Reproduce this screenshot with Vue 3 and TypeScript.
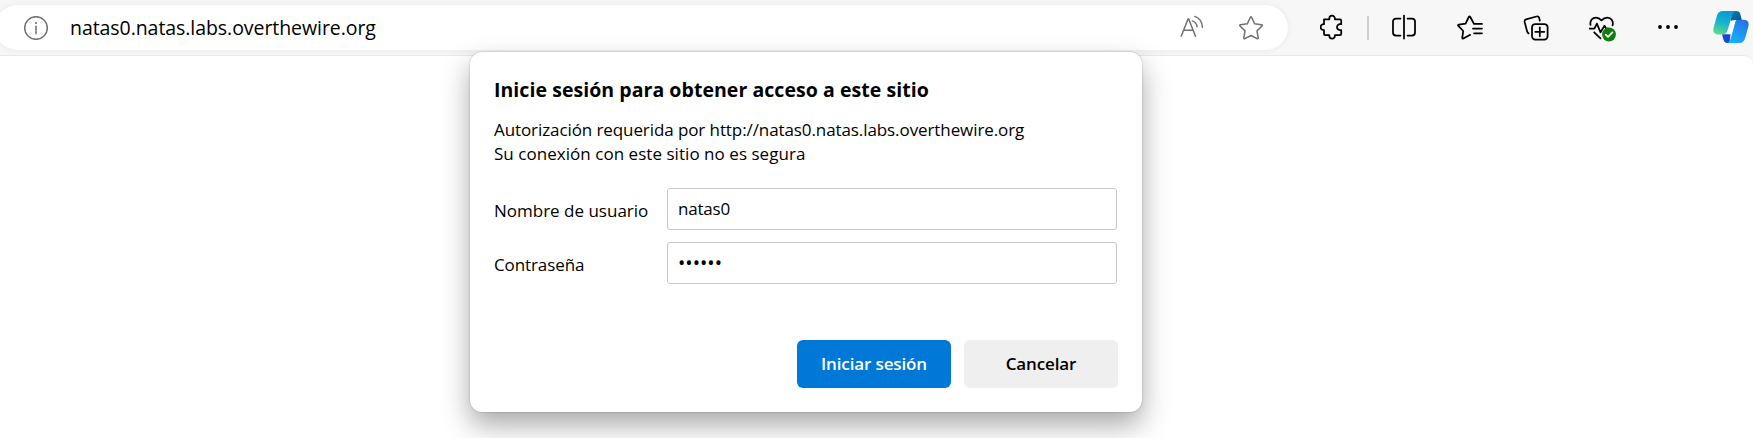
<script setup lang="ts">
import { ref } from 'vue'

const address = 'natas0.natas.labs.overthewire.org'
const username = ref('natas0')
const password = ref('natas0')
</script>

<template>
  <div class="browser">
    <header class="toolbar">
      <div class="address">
        <svg class="info" width="24" height="24" viewBox="0 0 24 24">
          <circle cx="12" cy="12" r="11.3" />
          <path d="M12 10.2v7.6" />
          <circle class="dot" cx="12" cy="7" r="1.1" />
        </svg>
        <span class="url">{{ address }}</span>
        <svg class="read" width="24" height="24" viewBox="0 0 24 24">
          <path d="M1.2 21.3 8.2 3.8h.4l6.9 17.5M3.6 15.3h9.6M12.3 5.9c2.6.9 4.500 3 4.800 5.800M14.8 1.400c4.600 1.700 7.400 5.800 7.600 10.800" />
        </svg>
        <svg class="fav" width="26" height="26" viewBox="0 0 26 26">
          <path d="M12.3 2.5q.7-1.3 1.4 0l2.9 6.2 6.9 1q1.3.3.5 1.3l-5 4.9 1.2 7q.1 1.3-1.1.8L13 20.5l-6.1 3.2q-1.2.5-1.1-.8l1.2-7-5-4.9q-.8-1 .5-1.3l6.9-1z" />
        </svg>
      </div>

      <nav class="actions">
        <svg class="puzzle" width="24" height="26" viewBox="0 0 24 26">
          <path d="M4 5.300h5.300V4.500a2.800 2.800 0 0 1 5.600 0v.8h5.100q1.200 0 1.200 1.200v3.700h-1.300a2.900 2.900 0 0 0 0 5.800h1.300v4q0 1.200-1.200 1.200h-5.100v.6a2.800 2.800 0 0 1-5.600 0v-.6H5.200Q4 21.200 4 20v-4h-.5a2.900 2.900 0 0 1 0-5.800H4z" />
        </svg>
        <span class="divider"></span>
        <svg class="split" width="24" height="26" viewBox="0 0 24 26">
          <path d="M8.500 4.500H4a3 3 0 0 0-3 3v11a3 3 0 0 0 3 3h4.500M15.500 4.500H20a3 3 0 0 1 3 3v11a3 3 0 0 1-3 3h-4.500M12 1.500v23" />
        </svg>
        <svg class="favorites" width="26" height="26" viewBox="0 0 26 26">
          <path d="M17 8.9 13.300 2q-.8-1.100-1.500 0L8.600 8.700l-6.800.9q-1.300.3-.4 1.300L6.200 16 5.300 22.600q-.1 1.300 1.100.9L13.200 19.800M17 8.900h8M16 13.600h9M17 18.300h8" />
        </svg>
        <svg class="collections" width="26" height="26" viewBox="0 0 26 26">
          <path d="M5.600 18.400Q4.500 17.900 4 16L1.600 6.900Q1.200 5 3 4.400L13.500 1.500q2-.5 2.700 1.400l.6 2.800" />
          <rect x="9" y="9" width="15.600" height="15.600" rx="3.300" />
          <path d="M16.800 12.300v9M12.300 16.800h9" />
        </svg>
        <svg class="health" width="28" height="28" viewBox="0 0 28 28">
          <path d="M1.500 9.800C.7 5.500 3.600 2.500 7 2.500c2.600 0 4 1.200 5.500 2.900 1.500-1.700 3.100-2.900 5.700-2.900 4 0 6.600 3.800 5.400 7.800M.4 13.500h5l2.500-4.900 3.600 8.700 4-6.500 1.600 2.700h2M5.200 17.300l6.300 6" />
          <circle class="ok" cx="20" cy="19.500" r="6.900" />
          <path class="tick" d="m16.700 19.700 2.300 2.300 4.400-4.600" />
        </svg>
        <svg class="more" width="22" height="6" viewBox="0 0 22 6">
          <circle cx="3" cy="3" r="1.900" /><circle cx="11" cy="3" r="1.900" /><circle cx="19" cy="3" r="1.900" />
        </svg>
        <svg class="copilot" width="36" height="34" viewBox="0 0 36 34">
          <defs>
            <linearGradient id="leaf" x1=".6" y1="0" x2=".3" y2="1">
              <stop offset="0" stop-color="#0799d8" /><stop offset=".5" stop-color="#16b2cf" /><stop offset="1" stop-color="#5bdc8c" />
            </linearGradient>
            <linearGradient id="wave" x1=".8" y1="0" x2=".2" y2="1">
              <stop offset="0" stop-color="#2a70dc" /><stop offset=".5" stop-color="#1e94fa" /><stop offset="1" stop-color="#16b4f8" />
            </linearGradient>
            <linearGradient id="fold" x1="0" y1="0" x2="1" y2="1">
              <stop offset="0" stop-color="#0a82ba" /><stop offset="1" stop-color="#07507d" />
            </linearGradient>
          </defs>
          <path fill="#fff" d="M17 9h8l-5 16h-9z" />
          <path fill="url(#fold)" d="M18 1h5q3.500 0 4.300 3l1.500 6H23q-4 0-5.200 1z" />
          <path fill="#1747d3" d="M9 24.200h8.500L16.500 33h-2q-3 0-4-3.300z" />
          <path fill="url(#wave)" d="M24 9.800h6.500q6 0 5 6.200l-3.300 12q-1.500 5-6 5H14.500q2.300-.9 3.200-4.300l4-14.500q1-4.400 2.300-4.400z" />
          <path fill="url(#leaf)" d="M9.700 1H23q-2.800.5-3.800 4L14.500 20.500q-1.200 3.900-5.200 3.900H5.500Q-.7 24.400.5 18L4 5.500Q5.300 1 9.700 1z" />
        </svg>
      </nav>
    </header>

    <main class="page"></main>

    <form class="dialog" @submit.prevent>
      <h1>Inicie sesión para obtener acceso a este sitio</h1>
      <p class="origin">Autorización requerida por http://{{ address }}</p>
      <p class="warning">Su conexión con este sitio no es segura</p>
      <div class="fields">
        <label class="user-label" for="user">Nombre de usuario</label>
        <input id="user" v-model="username" type="text" />
        <label class="pass-label" for="pass">Contraseña</label>
        <input id="pass" v-model="password" type="password" />
      </div>
      <div class="buttons">
        <button class="primary" type="submit">Iniciar sesión</button>
        <button class="cancel" type="button">Cancelar</button>
      </div>
    </form>
  </div>
</template>

<style>
body {
  margin: 0;
  overflow: hidden;
}
</style>

<style scoped>
.browser {
  position: relative;
  width: 1753px;
  height: 438px;
  overflow: hidden;
  background: #f7f7f7;
  font-family: 'Open Sans', 'Noto Sans', sans-serif;
  color: #000;
}
.toolbar {
  display: flex;
  height: 55px;
  align-items: flex-start;
}
svg {
  display: block;
  flex: none;
  fill: none;
  stroke: #111;
  stroke-width: 1.5;
  stroke-linecap: round;
  stroke-linejoin: round;
}
.address {
  display: flex;
  box-sizing: border-box;
  flex: none;
  width: 1293px;
  height: 45px;
  margin: 5px 0 0 -5px;
  padding-left: 29px;
  border-radius: 23px;
  background: #fff;
  box-shadow: 0 0 6px rgba(0, 0, 0, 0.07);
}
.address svg {
  stroke: #707070;
}
.info {
  margin-top: 11px;
}
.info .dot {
  fill: #707070;
  stroke: none;
}
.url {
  width: 1110px;
  margin-left: 22px;
  font-size: 19.5px;
  line-height: 45px;
  letter-spacing: -0.06px;
  white-space: nowrap;
}
.read {
  margin-top: 10px;
}
.fav {
  margin: 10px 0 0 34px;
}
.actions {
  display: flex;
}
.puzzle {
  margin: 14px 0 0 32px;
}
.puzzle,
.split,
.favorites,
.collections,
.health {
  stroke: #000;
  stroke-width: 1.75;
}
.divider {
  width: 2px;
  height: 24px;
  margin: 16px 0 0 23px;
  background: #cecece;
}
.split {
  margin: 14px 0 0 23px;
}
.favorites {
  margin: 15px 0 0 41px;
}
.collections {
  margin: 15px 0 0 40px;
}
.health {
  margin: 15px 0 0 40px;
}
.health .ok {
  fill: #107c10;
  stroke: none;
}
.health .tick {
  stroke: #fff;
}
.more {
  margin: 24px 0 0 40px;
}
.more circle {
  fill: #000;
  stroke: none;
}
.copilot {
  margin: 10px 0 0 34px;
  stroke: none;
}
.page {
  height: 382px;
  border-top: 1px solid #e9e9e9;
  border-top-right-radius: 9px;
  background: #fff;
}
.dialog {
  position: absolute;
  top: 52px;
  left: 470px;
  box-sizing: border-box;
  width: 672px;
  height: 360px;
  padding: 24px 24px 0 24px;
  border-radius: 12px;
  background: #fff;
  box-shadow: 0 0 2px rgba(0, 0, 0, 0.28), 0 13px 28px rgba(0, 0, 0, 0.34);
}
h1 {
  margin: 0 0 14px;
  font-size: 19.5px;
  font-weight: 700;
  line-height: 28px;
  letter-spacing: 0.05px;
  white-space: nowrap;
}
p {
  margin: 0;
  font-size: 17px;
  line-height: 24px;
  white-space: nowrap;
}
.origin {
  letter-spacing: -0.09px;
}
.warning {
  letter-spacing: 0.04px;
}
.fields {
  display: grid;
  grid-template-columns: 173px 450px;
  row-gap: 12px;
  margin-top: 22px;
}
label {
  font-size: 17px;
  line-height: 46px;
  height: 42px;
  white-space: nowrap;
}
.pass-label {
  letter-spacing: -0.1px;
}
input {
  box-sizing: border-box;
  width: 450px;
  height: 42px;
  padding: 0 10px 1px;
  border: 1px solid #c8c8c8;
  border-radius: 3px;
  outline: none;
  background: #fff;
  color: #000;
  font: 17px 'Open Sans', 'Noto Sans', sans-serif;
  letter-spacing: -0.2px;
}
#pass {
  font-size: 19.5px;
  letter-spacing: 0;
}
.buttons {
  display: flex;
  justify-content: flex-end;
  gap: 13px;
  margin-top: 56px;
}
button {
  width: 154px;
  height: 48px;
  padding: 0;
  border: 0;
  border-radius: 6px;
  background: #efefef;
  color: #000;
  font: 600 17px/48px 'Open Sans', 'Noto Sans', sans-serif;
  letter-spacing: -0.12px;
}
.primary {
  background: #0078d7;
  color: #fff;
}
</style>
